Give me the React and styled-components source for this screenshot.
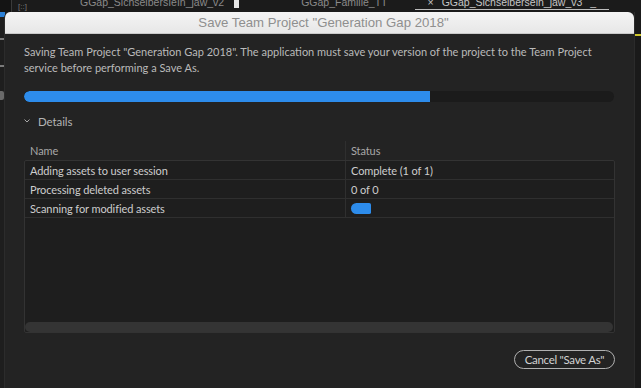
import React from 'react'
import styled, { createGlobalStyle } from 'styled-components'

const GlobalStyle = createGlobalStyle`
  html, body {
    margin: 0;
    padding: 0;
    background: #1c1c1c;
    overflow: hidden;
  }
  body {
    width: 641px;
    height: 388px;
    font-family: Lato, "Open Sans", sans-serif;
  }
`

const Screen = styled.div`
  display: flex;
  flex-direction: column;
  width: 641px;
  height: 388px;
  overflow: hidden;
`

const TabBar = styled.div`
  display: flex;
  align-items: flex-end;
  height: 12px;
  flex-shrink: 0;
  padding-bottom: 2px;
  box-sizing: border-box;
  background: #1b1b1b;
  overflow: hidden;
  font-family: "Liberation Sans", sans-serif;
  font-size: 10.5px;
  line-height: 11px;
  color: #8a8a8a;
  & > * {
    flex-shrink: 0;
  }
`

const CornerBox = styled.div`
  width: 12px;
  height: 12px;
  margin-bottom: -2px;
  background: #141414;
  border-right: 1px solid #3a3a3a;
  box-sizing: border-box;
`

const GridGlyph = styled.div`
  width: 12px;
  margin-left: 6px;
  margin-right: ${p => p.$mr}px;
  font-size: 8px;
  line-height: 6px;
  color: #777;
`

const Tab = styled.div`
  display: flex;
  align-items: flex-end;
  gap: 8px;
  padding: 0 ${p => p.$pad || 0}px 1px;
  margin-left: ${p => p.$ml || 0}px;
  color: ${p => (p.$active ? '#c6c6c6' : '#8a8a8a')};
  border-bottom: 1px solid ${p => (p.$active ? '#bdbdbd' : 'transparent')};
  white-space: nowrap;
`

const TabMark = styled.span`
  display: inline-block;
  width: 5px;
  height: 8px;
  margin-left: 10px;
  margin-bottom: 2px;
  background: #e6e6e6;
`

const Workspace = styled.div`
  flex: 1;
  display: flex;
  min-height: 0;
`

const LeftRail = styled.div`
  width: 4px;
  flex-shrink: 0;
  background: #1e1e1e;
  display: flex;
  flex-direction: column;
  align-items: flex-start;
`

const RailBlue = styled.div`
  width: 5px;
  height: 5px;
  background: #2a7fd6;
  margin-bottom: 21px;
`

const RailArrow = styled.div`
  width: 4px;
  height: 2px;
  background: #7a7a7a;
  margin-bottom: ${p => p.$mb}px;
`

const RailHand = styled.div`
  width: 4px;
  height: 9px;
  background: #6a6a6a;
  border-radius: 0 2px 2px 0;
`

const RightRail = styled.div`
  width: 7px;
  flex-shrink: 0;
  background: #1a1a1a;
  border-left: 1px solid #2b2b2b;
  box-sizing: border-box;
  padding-top: 22px;
`

const YellowMark = styled.div`
  height: 2px;
  background: #cfc62a;
`

const Dialog = styled.div`
  flex: 1;
  display: flex;
  flex-direction: column;
  background: #232323;
  border-radius: 6px 6px 0 0;
  border-left: 1px solid #2c2c2c;
  overflow: hidden;
`

const TitleBar = styled.div`
  height: 22px;
  flex-shrink: 0;
  display: flex;
  align-items: center;
  justify-content: center;
  background: linear-gradient(#f4f4f4, #e7e7e7);
  border-bottom: 1px solid #c9c9c9;
  box-sizing: border-box;
  font-family: "Liberation Sans", Arial, sans-serif;
  font-size: 13.2px;
  color: #8f8f8f;
  padding-left: 8px;
`

const Body = styled.div`
  display: flex;
  flex-direction: column;
  padding: 10px 19px 0 19px;
  color: #b4b4b4;
  font-size: 11px;
  letter-spacing: -0.1px;
`

const Message = styled.p`
  margin: 0;
  line-height: 16px;
  color: #bababa;
  letter-spacing: 0;
  white-space: nowrap;
`

const Progress = styled.div`
  margin-top: 15px;
  height: 11px;
  width: 590px;
  border-radius: 6px;
  background: #1b1b1b;
  overflow: hidden;
`

const ProgressFill = styled.div`
  height: 100%;
  background: #2d8ceb;
  border-radius: 6px 0 0 6px;
`

const Disclosure = styled.div`
  display: flex;
  align-items: center;
  gap: 8px;
  margin-top: 12px;
  height: 14px;
  color: #b4b4b4;
  font-size: 11.5px;
`

const TableHeader = styled.div`
  display: grid;
  grid-template-columns: 321px 1fr;
  margin-top: 13px;
  height: 19px;
  width: 591px;
`

const HeadCell = styled.div`
  display: flex;
  align-items: center;
  padding-left: ${p => (p.$first ? 6 : 5)}px;
  border-left: ${p => (p.$first ? 'none' : '1px solid #2f2f2f')};
  color: #a8a8a8;
`

const TableBox = styled.div`
  display: flex;
  flex-direction: column;
  width: 591px;
  height: 173px;
  box-sizing: border-box;
  background: #1e1e1e;
  border: 1px solid #333;
  border-radius: 2px;
`

const Row = styled.div`
  display: grid;
  grid-template-columns: 320px 1fr;
  height: 19px;
  border-bottom: 1px solid #2f2f2f;
  box-sizing: border-box;
`

const Cell = styled.div`
  display: flex;
  align-items: center;
  padding-left: 5px;
  border-left: ${p => (p.$first ? 'none' : '1px solid #2f2f2f')};
  color: #cdcdcd;
  white-space: nowrap;
`

const MiniBar = styled.div`
  width: 20px;
  height: 11px;
  background: #2d8ceb;
  border-radius: 6px 2px 2px 6px;
`

const Spacer = styled.div`
  flex: 1;
`

const ScrollBar = styled.div`
  height: 10px;
  margin: 0 1px 0 0;
  background: #343434;
  border-radius: 5px;
`

const Footer = styled.div`
  display: flex;
  justify-content: flex-end;
  width: 591px;
  margin-top: 17px;
`

const CancelButton = styled.button`
  height: 19px;
  width: 101px;
  padding: 0;
  border: 1.5px solid #b0b0b0;
  border-radius: 10px;
  background: transparent;
  color: #d2d2d2;
  font-family: Lato, sans-serif;
  font-size: 11.5px;
  letter-spacing: -0.3px;
  line-height: 15px;
  white-space: nowrap;
`

const rows = [
  { name: 'Adding assets to user session', status: 'Complete (1 of 1)' },
  { name: 'Processing deleted assets', status: '0 of 0' },
  { name: 'Scanning for modified assets', bar: true },
]

function Chevron() {
  return (
    <svg width="6" height="4" viewBox="0 0 6 4">
      <path d="M0.5 0.5 L3 3 L5.5 0.5" fill="none" stroke="#a8a8a8" strokeWidth="1" />
    </svg>
  )
}

export default function App() {
  return (
    <Screen>
      <GlobalStyle />
      <TabBar>
        <CornerBox />
        <GridGlyph $mr={50}>[::]</GridGlyph>
        <Tab>GGap_SichselbersIeIn_jaw_v2</Tab>
        <TabMark />
        <Tab $ml={62}>GGap_Familie_TT</Tab>
        <Tab $active $pad={13} $ml={27}>
          <span>×</span>
          <span>GGap_Sichselbersein_jaw_v3</span>
          <span>_</span>
        </Tab>
      </TabBar>
      <Workspace>
        <LeftRail>
          <RailBlue />
          <RailArrow $mb={25} />
          <RailArrow $mb={24} />
          <RailHand />
        </LeftRail>
        <Dialog>
          <TitleBar>Save Team Project "Generation Gap 2018"</TitleBar>
          <Body>
            <Message>
              Saving Team Project "Generation Gap 2018". The application must save your version of the project to the Team Project
              <br />
              service before performing a Save As.
            </Message>
            <Progress>
              <ProgressFill style={{ width: '68.8%' }} />
            </Progress>
            <Disclosure>
              <Chevron />
              <span>Details</span>
            </Disclosure>
            <TableHeader>
              <HeadCell $first>Name</HeadCell>
              <HeadCell>Status</HeadCell>
            </TableHeader>
            <TableBox>
              {rows.map(r => (
                <Row key={r.name}>
                  <Cell $first>{r.name}</Cell>
                  <Cell>{r.bar ? <MiniBar /> : r.status}</Cell>
                </Row>
              ))}
              <Spacer />
              <ScrollBar />
            </TableBox>
            <Footer>
              <CancelButton>Cancel "Save As"</CancelButton>
            </Footer>
          </Body>
        </Dialog>
        <RightRail>
          <YellowMark />
        </RightRail>
      </Workspace>
    </Screen>
  )
}
